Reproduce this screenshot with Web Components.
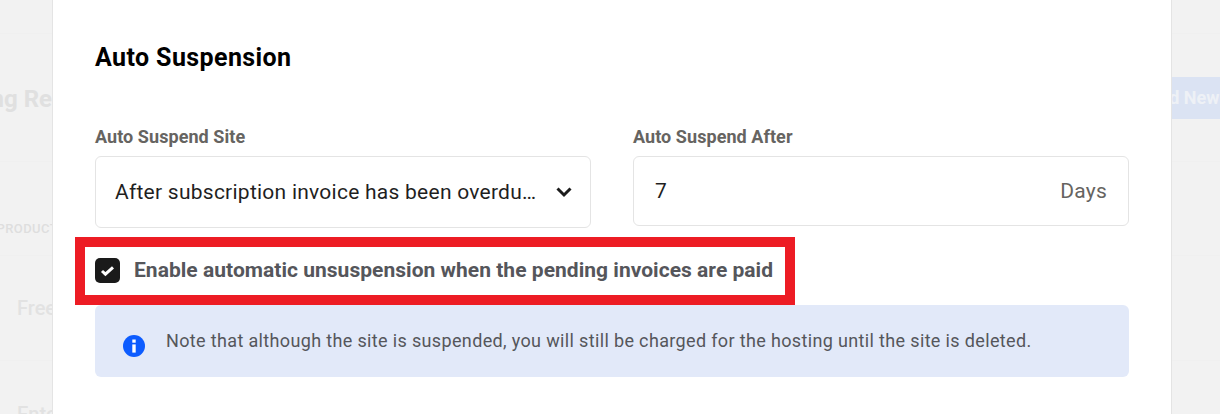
<!DOCTYPE html>
<html>
<head>
<meta charset="utf-8">
<style>
  html, body { margin:0; height:414px; overflow:hidden; background:#f2f2f2; font-family:Roboto, "Liberation Sans", sans-serif; }
</style>
</head>
<body>
<page-backdrop></page-backdrop>
<suspension-modal>
  <h2 slot="title">Auto Suspension</h2>
  <form-field slot="site" label="Auto Suspend Site">
    <select-box value="After subscription invoice has been overdue for"></select-box>
  </form-field>
  <form-field slot="after" label="Auto Suspend After">
    <suffix-input value="7" suffix="Days"></suffix-input>
  </form-field>
  <check-row slot="check">Enable automatic unsuspension when the pending invoices are paid</check-row>
  <info-note slot="note">Note that although the site is suspended, you will still be charged for the hosting until the site is deleted.</info-note>
</suspension-modal>
<script>
class PageBackdrop extends HTMLElement {
  constructor() {
    super();
    this.attachShadow({ mode: 'open' });
    this.shadowRoot.innerHTML = `
      <style>
        :host { position:absolute; inset:0; display:block; overflow:hidden; color:#e2e2e2; font-weight:700; }
        .t { position:absolute; white-space:nowrap; }
        .line { position:absolute; left:0; right:0; height:1px; background:#f0f0f0; }
        .title { right:1168px; top:85px; font-size:24px; color:#e0e0e0; }
        .btn { position:absolute; left:1172px; top:77px; width:60px; height:42px; background:#dbe3f3; color:#eef1f6; font-size:18px; line-height:42px; white-space:nowrap; text-indent:-25px; }
        .head { right:1162px; top:221px; font-size:13px; letter-spacing:.4px; font-weight:500; color:#dedede; }
        .row { left:17px; font-size:20px; font-weight:500; }
      </style>
      <div class="line" style="top:33px"></div>
      <div class="line" style="top:161px"></div>
      <div class="line" style="top:255px"></div>
      <div class="line" style="top:360px"></div>
      <span class="t title">Billing Re</span>
      <div class="btn">Add New</div>
      <span class="t head">PRODUCT</span>
      <span class="t row" style="top:296px">Free</span>
      <span class="t row" style="top:402px">Enterprise</span>
    `;
  }
}
customElements.define('page-backdrop', PageBackdrop);

class SuspensionModal extends HTMLElement {
  constructor() {
    super();
    this.attachShadow({ mode: 'open' });
    this.shadowRoot.innerHTML = `
      <style>
        :host { position:absolute; left:52px; top:0; width:1118px; height:414px; box-sizing:content-box; display:block;
          background:#fff; border-left:1px solid #e4e4e4; border-right:1px solid #e4e4e4; }
        .body { padding:45px 42px 0 42px; }
        ::slotted(h2) { margin:0; font-size:25px; line-height:26px; font-weight:700; letter-spacing:.4px; color:#000; }
        .fields { display:grid; grid-template-columns:496px 496px; column-gap:42px; margin-top:56px; align-items:start; }
      </style>
      <div class="body">
        <slot name="title"></slot>
        <div class="fields">
          <slot name="site"></slot>
          <slot name="after"></slot>
        </div>
        <slot name="check"></slot>
        <slot name="note"></slot>
      </div>
    `;
  }
}
customElements.define('suspension-modal', SuspensionModal);

class FormField extends HTMLElement {
  constructor() {
    super();
    this.attachShadow({ mode: 'open' });
    this.shadowRoot.innerHTML = `
      <style>
        :host { display:block; }
        .label { font-size:18px; line-height:20px; font-weight:700; letter-spacing:.06px; color:#666461; margin-bottom:9px; }
      </style>
      <div class="label"></div>
      <slot></slot>
    `;
  }
  connectedCallback() {
    this.shadowRoot.querySelector('.label').textContent = this.getAttribute('label');
  }
}
customElements.define('form-field', FormField);

class SelectBox extends HTMLElement {
  constructor() {
    super();
    this.attachShadow({ mode: 'open' });
    this.shadowRoot.innerHTML = `
      <style>
        :host { display:flex; align-items:center; height:72px; box-sizing:border-box; border:1px solid #e4e4e4; border-radius:6px;
          padding:0 17px 0 19px; gap:14px; font-size:21px; color:#1f1f1f; }
        .val { flex:1; min-width:0; overflow:hidden; white-space:nowrap; text-overflow:ellipsis; letter-spacing:.25px; }
        svg { flex:none; display:block; }
      </style>
      <span class="val"></span>
      <svg width="18" height="12" viewBox="0 0 18 12"><path d="M2.5 2.5 9 9l6.5-6.5" fill="none" stroke="#1c1c1c" stroke-width="3"/></svg>
    `;
  }
  connectedCallback() {
    this.shadowRoot.querySelector('.val').textContent = this.getAttribute('value');
  }
}
customElements.define('select-box', SelectBox);

class SuffixInput extends HTMLElement {
  constructor() {
    super();
    this.attachShadow({ mode: 'open' });
    this.shadowRoot.innerHTML = `
      <style>
        :host { display:flex; align-items:center; justify-content:space-between; height:70px; box-sizing:border-box;
          border:1px solid #e4e4e4; border-radius:6px; padding:0 21px; font-size:21px; color:#1f1f1f; }
        .suf { font-size:21px; letter-spacing:.25px; color:#666461; }
      </style>
      <span class="val"></span><span class="suf"></span>
    `;
  }
  connectedCallback() {
    this.shadowRoot.querySelector('.val').textContent = this.getAttribute('value');
    this.shadowRoot.querySelector('.suf').textContent = this.getAttribute('suffix');
  }
}
customElements.define('suffix-input', SuffixInput);

class CheckRow extends HTMLElement {
  constructor() {
    super();
    this.attachShadow({ mode: 'open' });
    this.shadowRoot.innerHTML = `
      <style>
        :host { display:flex; align-items:center; gap:14px; box-sizing:border-box; width:720px; height:68px; margin:9px 0 0 -20px;
          border:10px solid #ed1c24; padding-left:10px; font-size:21px; font-weight:700; color:#55565b; white-space:nowrap; }
        .box { width:25px; height:25px; flex:none; background:#1a1a1a; border-radius:5px; display:flex; align-items:center; justify-content:center; margin-top:-1px; }
        .txt { margin-top:-3px; letter-spacing:.03px; }
      </style>
      <span class="box"><svg width="15" height="12" viewBox="0 0 15 12"><path d="M2 6 5.4 9.2 13 2.4" fill="none" stroke="#fff" stroke-width="3"/></svg></span>
      <span class="txt"><slot></slot></span>
    `;
  }
}
customElements.define('check-row', CheckRow);

class InfoNote extends HTMLElement {
  constructor() {
    super();
    this.attachShadow({ mode: 'open' });
    this.shadowRoot.innerHTML = `
      <style>
        :host { display:flex; align-items:center; gap:20px; box-sizing:border-box; height:72px; padding:0 27px 0 27px;
          background:#e2e9f9; border-radius:6px; font-size:18px; color:#55565b; letter-spacing:.35px; white-space:nowrap; }
        svg { flex:none; display:block; margin-top:9px; }
        .txt { margin-top:-2px; }
      </style>
      <svg width="24" height="24" viewBox="0 0 24 24"><circle cx="12" cy="12" r="11" fill="#0d5cff"/><rect x="10.3" y="5.5" width="3.4" height="3.2" fill="#fff"/><rect x="10.3" y="10.4" width="3.4" height="8.2" fill="#fff"/></svg>
      <span class="txt"><slot></slot></span>
    `;
  }
}
customElements.define('info-note', InfoNote);
</script>
</body>
</html>
